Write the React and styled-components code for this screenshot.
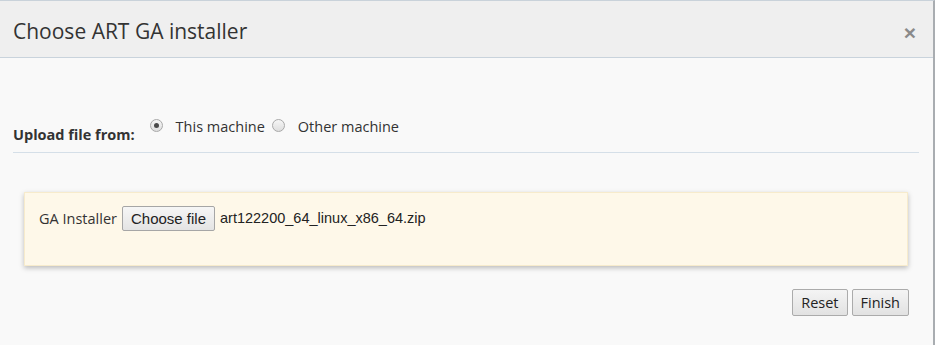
import styled, { createGlobalStyle } from "styled-components";

const GlobalStyle = createGlobalStyle`
  html, body {
    margin: 0;
    background: #f9f9f9;
  }
`;

const Modal = styled.div`
  box-sizing: border-box;
  width: 935px;
  height: 345px;
  border-top: 1px solid #c9d2da;
  border-right: 2px solid #a9adb1;
  background: #f9f9f9;
  font-family: "Open Sans", "Liberation Sans", sans-serif;
  color: #333;
`;

const Header = styled.div`
  height: 57px;
  box-sizing: border-box;
  display: flex;
  align-items: center;
  justify-content: space-between;
  padding: 4px 17px 0 13px;
  background: #efefef;
  border-bottom: 1px solid #c9d3dc;
`;

const Title = styled.h4`
  margin: 0;
  font-size: 21px;
  font-weight: 400;
  color: #333;
`;

const Close = styled.span`
  font-family: "Liberation Sans", sans-serif;
  font-size: 21px;
  font-weight: 700;
  color: #8a8a8a;
  line-height: 1;
  margin-top: 2px;
`;

const Body = styled.div`
  padding: 57px 14px 0 13px;
`;

const UploadRow = styled.div`
  display: flex;
  align-items: flex-start;
  height: 37px;
  border-bottom: 1px solid #d5dfe8;
`;

const Label = styled.span`
  font-size: 14.5px;
  font-weight: 700;
  margin-top: 10px;
  margin-right: 15px;
  color: #333;
`;

const RadioOption = styled.label`
  display: flex;
  align-items: center;
  font-size: 14.5px;
  color: #333;
  margin-top: 2px;
  margin-right: 7px;
`;

const RadioDot = styled.span`
  box-sizing: border-box;
  width: 13px;
  height: 13px;
  border-radius: 50%;
  border: 1px solid #a9a9a9;
  background: linear-gradient(#f6f6f6, #dedede);
  margin-right: 13px;
  margin-top: -3px;
  display: flex;
  align-items: center;
  justify-content: center;
  &::after {
    content: "";
    width: 5px;
    height: 5px;
    border-radius: 50%;
    background: ${(p) => (p.checked ? "#4a4a4a" : "transparent")};
  }
`;

const Panel = styled.div`
  box-sizing: border-box;
  margin: 39px 11px 0 11px;
  height: 74px;
  padding: 13px 14px;
  background: #fef8e9;
  border: 1px solid #f7ebcc;
  box-shadow: 0 2px 5px rgba(0, 0, 0, 0.25);
  display: flex;
  align-items: flex-start;
  font-size: 14.5px;
`;

const FieldLabel = styled.span`
  margin-right: 5px;
  line-height: 25px;
`;

const FileButton = styled.span`
  box-sizing: border-box;
  display: inline-flex;
  align-items: center;
  height: 25px;
  padding: 0 8px;
  font-family: "Liberation Sans", Arial, sans-serif;
  font-size: 15px;
  color: #222;
  background: linear-gradient(#f6f6f6, #e4e4e4);
  border: 1px solid #a6a6a6;
  border-radius: 2px;
  margin-right: 5px;
`;

const FileName = styled.span`
  font-family: "Liberation Sans", Arial, sans-serif;
  font-size: 14.5px;
  color: #222;
  line-height: 25px;
`;

const Actions = styled.div`
  display: flex;
  justify-content: flex-end;
  gap: 4px;
  margin: 23px 10px 0 0;
`;

const Button = styled.button`
  box-sizing: border-box;
  height: 27px;
  padding: 0 8px;
  font-family: "Open Sans", "Liberation Sans", sans-serif;
  font-size: 14.5px;
  color: #222;
  background: linear-gradient(#f4f4f4, #e2e2e2);
  border: 1px solid #ababab;
  border-radius: 2px;
`;

export default function App() {
  return (
    <>
      <GlobalStyle />
      <Modal>
        <Header>
          <Title>Choose ART GA installer</Title>
          <Close>×</Close>
        </Header>
        <Body>
          <UploadRow>
            <Label>Upload file from:</Label>
            <RadioOption>
              <RadioDot checked />
              This machine
            </RadioOption>
            <RadioOption>
              <RadioDot />
              Other machine
            </RadioOption>
          </UploadRow>
          <Panel>
            <FieldLabel>GA Installer</FieldLabel>
            <FileButton>Choose file</FileButton>
            <FileName>art122200_64_linux_x86_64.zip</FileName>
          </Panel>
          <Actions>
            <Button>Reset</Button>
            <Button>Finish</Button>
          </Actions>
        </Body>
      </Modal>
    </>
  );
}
